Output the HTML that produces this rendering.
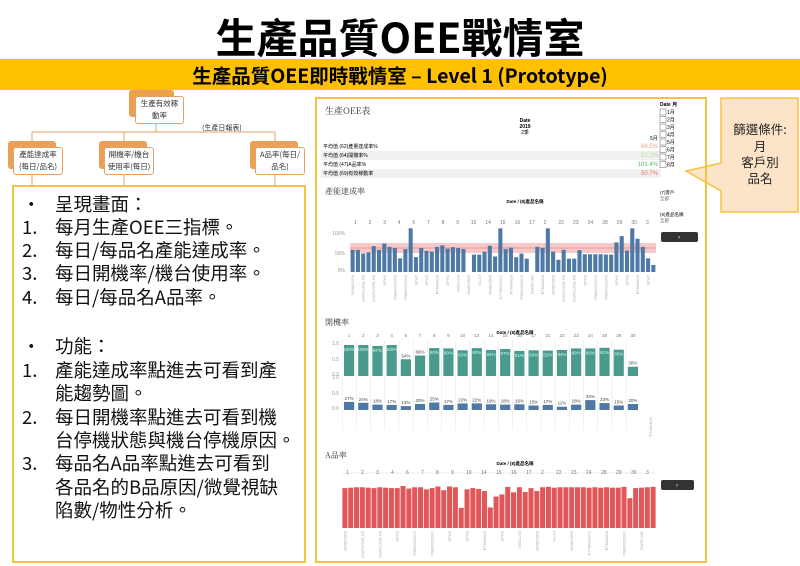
<!DOCTYPE html>
<html><head><meta charset="utf-8">
<style>
*{margin:0;padding:0;box-sizing:border-box}
body{width:800px;height:566px;overflow:hidden;background:#fff;position:relative;font-family:"Liberation Sans","Noto Sans CJK TC",sans-serif;color:#000}
.a{position:absolute}
#title{left:0;width:800px;top:9px;text-align:center;font-size:41px;font-weight:bold;line-height:52px;font-family:"Noto Sans CJK TC",sans-serif}
#bar{left:0;top:59px;width:800px;height:31px;background:#FFC000}
#sub{left:0;width:800px;top:60px;text-align:center;font-size:19.5px;font-weight:bold;line-height:29px;font-family:"Noto Sans CJK TC",sans-serif}
.ob{position:absolute;background:#fff;border:1px solid #E8A060;border-radius:3px;font-size:7.5px;line-height:12px;text-align:center;display:flex;align-items:center;justify-content:center;font-family:"Noto Sans CJK TC",sans-serif;color:#333;white-space:nowrap}
.sh{position:absolute;background:#EBA055;border-radius:3px}
#txt{left:12px;top:185px;width:294px;height:378px;border:2px solid #F5C242}
.ln{position:absolute;left:8px;font-size:18.5px;line-height:23px;font-family:"Noto Sans CJK TC",sans-serif;white-space:nowrap;color:#111}
.ln b{font-weight:normal;display:inline-block;width:33px}
#dash{left:315px;top:97px;width:392px;height:466px;border:2px solid #F5C242}
.s{font-family:"Noto Serif CJK SC",serif}
</style></head><body>
<div class="a" id="title">生產品質OEE戰情室</div>
<div class="a" id="bar"></div>
<div class="a" id="sub">生產品質OEE即時戰情室 – Level 1 (Prototype)</div>

<svg class="a" style="left:0;top:90px" width="310" height="95">
<path d="M156 32 V42 M32 42 H275 M32 42 V55 M124 42 V55 M275 42 V55 M32 83 V95 M124 83 V95 M275 83 V95" stroke="#E8A060" stroke-width="1" fill="none"/>
</svg>
<div class="sh" style="left:129px;top:90px;width:45px;height:27px"></div>
<div class="ob" style="left:135px;top:96px;width:49px;height:28px">生產有效稼<br>動率</div>
<div class="a" style="left:202px;top:123px;font-size:7px;color:#333;font-family:'Noto Sans CJK TC',sans-serif">(生產日報表)</div>
<div class="sh" style="left:8px;top:141px;width:48px;height:28px"></div>
<div class="ob" style="left:13px;top:147px;width:50px;height:28px">產能達成率<br>(每日/品名)</div>
<div class="sh" style="left:99px;top:141px;width:48px;height:28px"></div>
<div class="ob" style="left:104px;top:147px;width:50px;height:28px">開機率/機台<br>使用率(每日)</div>
<div class="sh" style="left:250px;top:141px;width:48px;height:28px"></div>
<div class="ob" style="left:255px;top:147px;width:50px;height:28px">A品率(每日/<br>品名)</div>

<div class="a" id="txt">
<div class="ln" style="top:6px"><b>•</b>呈現畫面：</div>
<div class="ln" style="top:29px"><b>1.</b>每月生產OEE三指標。</div>
<div class="ln" style="top:52px"><b>2.</b>每日/每品名產能達成率。</div>
<div class="ln" style="top:75px"><b>3.</b>每日開機率/機台使用率。</div>
<div class="ln" style="top:99px"><b>4.</b>每日/每品名A品率。</div>
<div class="ln" style="top:148px"><b>•</b>功能：</div>
<div class="ln" style="top:172px"><b>1.</b>產能達成率點進去可看到產</div>
<div class="ln" style="top:195px"><b></b>能趨勢圖。</div>
<div class="ln" style="top:219px"><b>2.</b>每日開機率點進去可看到機</div>
<div class="ln" style="top:242px"><b></b>台停機狀態與機台停機原因。</div>
<div class="ln" style="top:265px"><b>3.</b>每品名A品率點進去可看到</div>
<div class="ln" style="top:289px"><b></b>各品名的B品原因/微覺視缺</div>
<div class="ln" style="top:312px"><b></b>陷數/物性分析。</div>
</div>

<svg class="a" style="left:684px;top:96px" width="116" height="120">
<path d="M37 2 H114 V116 H37 V95 L2 75 L37 67 Z" fill="#FCE4C8" stroke="#F5C242" stroke-width="1.5"/>
<text x="76" y="38" font-size="12.5" text-anchor="middle" font-family="Noto Sans CJK TC,sans-serif" fill="#222">篩選條件:</text>
<text x="76" y="55" font-size="12.5" text-anchor="middle" font-family="Noto Sans CJK TC,sans-serif" fill="#222">月</text>
<text x="76" y="71" font-size="12.5" text-anchor="middle" font-family="Noto Sans CJK TC,sans-serif" fill="#222">客戶別</text>
<text x="76" y="87" font-size="12.5" text-anchor="middle" font-family="Noto Sans CJK TC,sans-serif" fill="#222">品名</text>
</svg>

<div class="a" id="dash"></div>
<svg class="a" id="sv" style="left:315px;top:97px" width="392" height="466" font-family="Liberation Sans,Noto Sans CJK TC,sans-serif">
<text x="10" y="17" font-size="9" class="s" fill="#333">生產OEE表</text>
<text x="210" y="25" font-size="5" text-anchor="middle" font-weight="bold">Date</text>
<text x="210" y="31" font-size="5" text-anchor="middle" font-weight="bold">2019</text>
<text x="210" y="37" font-size="5" text-anchor="middle">2季</text>
<text x="335" y="43" font-size="5">5月</text>
<rect x="6" y="45" width="340" height="9" fill="#fff"/>
<rect x="6" y="54" width="340" height="9" fill="#f0f0f0"/>
<rect x="6" y="63" width="340" height="9" fill="#fff"/>
<rect x="6" y="72" width="340" height="9" fill="#f0f0f0"/>
<text x="8" y="51" font-size="5">平均值 (62)產量達成率%</text>
<text x="8" y="60" font-size="5">平均值 (64)開機率%</text>
<text x="8" y="69" font-size="5">平均值 (47)A品率%</text>
<text x="8" y="78" font-size="5">平均值 (69)有效稼動率</text>
<text x="343" y="51" font-size="6" text-anchor="end" fill="#f4a08a">66.5%</text>
<text x="343" y="60" font-size="6" text-anchor="end" fill="#b5dca0">82.1%</text>
<text x="343" y="69" font-size="6" text-anchor="end" fill="#5cc05c">101.4%</text>
<text x="343" y="78" font-size="6" text-anchor="end" fill="#f07060">50.7%</text>
<text x="345" y="9" font-size="5" font-weight="bold">Date 月</text>
<g id="cb"></g>
<text x="10" y="97" font-size="8" class="s" fill="#333">產能達成率</text>
<text x="210" y="106" font-size="4.5" text-anchor="middle" font-weight="bold">Date / (8)產品名稱</text>
<text x="345" y="97" font-size="4.5">(7)客戶</text><text x="345" y="103" font-size="4.5" fill="#666">全部</text>
<text x="345" y="119" font-size="4.5">(8)產品名稱</text><text x="345" y="125" font-size="4.5" fill="#666">全部</text>
<rect x="346" y="135" width="37" height="10" rx="2" fill="#333"/><text x="364" y="142" font-size="6" fill="#fff" text-anchor="middle">›</text>
<rect x="35" y="146" width="306" height="10" fill="#f4b4b4" opacity="0.7"/>
<line x1="35" y1="151" x2="341" y2="151" stroke="#e06060" stroke-width="0.6"/>
<text x="10" y="228" font-size="8" class="s" fill="#333">開機率</text>
<text x="200" y="237" font-size="4.5" text-anchor="middle" font-weight="bold">Date / (8)產品名稱</text>
<text x="10" y="361" font-size="8" class="s" fill="#333">A品率</text>
<text x="200" y="368" font-size="4.5" text-anchor="middle" font-weight="bold">Date / (8)產品名稱</text>
<rect x="346" y="383" width="33" height="10" rx="2" fill="#333"/><text x="362" y="390" font-size="6" fill="#fff" text-anchor="middle">›</text>
<line x1="27" y1="376" x2="341" y2="376" stroke="#ddd" stroke-width="0.5"/>
<g id="bars"></g>
</svg>
<script>
var NS="http://www.w3.org/2000/svg",g=document.getElementById('bars');
function r(x,y,w,h,c){var e=document.createElementNS(NS,'rect');e.setAttribute('x',x);e.setAttribute('y',y);e.setAttribute('width',w);e.setAttribute('height',h);e.setAttribute('fill',c);g.appendChild(e);}
function t(x,y,s,txt,c,a,rot){var e=document.createElementNS(NS,'text');e.setAttribute('x',x);e.setAttribute('y',y);e.setAttribute('font-size',s);e.setAttribute('fill',c||'#555');if(a)e.setAttribute('text-anchor',a);if(rot)e.setAttribute('transform','rotate(-90 '+x+' '+y+')');e.textContent=txt;g.appendChild(e);}
var cb=document.getElementById('cb');
for(var i=0;i<8;i++){var e=document.createElementNS(NS,'rect');e.setAttribute('x',345);e.setAttribute('y',12+i*7.5);e.setAttribute('width',6);e.setAttribute('height',6);e.setAttribute('fill','#fff');e.setAttribute('stroke','#666');e.setAttribute('stroke-width','0.5');cb.appendChild(e);
var tx=document.createElementNS(NS,'text');tx.setAttribute('x',352);tx.setAttribute('y',17+i*7.5);tx.setAttribute('font-size',5);tx.textContent=(i+1)+'月';cb.appendChild(tx);}
var nm=['V840K25W','LEAFLOSE-D5','LEAFLOSE-D5','SPH2','P080N22W-D','P080N22W-D','SPH2','SPH2','R760AK03','SPH2','G0SU-S3','V840K25W','N1-14','V840K25W','R770K03W-C','R760AK03','P080N02W-D','DW35-031','R760AK03'];
var v1=[60,60,50,53,70,60,77,68,65,37,62,118,40,65,57,55,68,72,63,67,65,62,0,47,47,55,71,42,118,62,66,40,50,36,0,68,65,118,55,33,60,36,36,59,48,48,48,48,47,47,80,97,58,118,90,68,37,19];
var x0=35,w=306/v1.length;
for(var i=0;i<v1.length;i++){if(v1[i])r(x0+i*w+0.6,175-v1[i]*0.37,w-1.2,v1[i]*0.37,'#4E79A7');if(i%2==0)t(x0+i*w+w/2+1.5,178,4,nm[(i/2|0)%nm.length],'#aaa','end',1);}
t(30,138,5,'100%','#999','end');t(30,158,5,'50%','#999','end');t(30,175,5,'0%','#999','end');
var d1=['1','2','3','4','6','7','8','9','10','14','15','16','17','2','22','23','24','28','29','30','3'];
for(var i=0;i<d1.length;i++)t(39+i*14.6,127,5,d1[i],'#777');
var gv=[100,100,97,100,54,66,90,89,83,90,84,87,81,83,82,84,89,89,91,85,89,30];
var bv=[27,24,18,17,13,20,25,17,22,22,19,18,19,15,17,11,18,33,23,15,20,11];
var n=21,cw=298/n;
for(var i=0;i<n;i++){var x=27+i*cw+2,h=gv[i]*0.31;if(i==20)h=30*0.31;
r(x,279-h,cw-4,h,'#4A9A8E');t(x+cw/2-2,279-Math.min(h,31)+(gv[i]>80&&i<20?6:-2),4.5,(i==20?30:gv[i])+'%',gv[i]>80&&i<20?'#cfe':'#444','middle');
var bh=bv[i]*0.3;r(x,313-bh,cw-4,bh,'#4E79A7');t(x+cw/2-2,313-bh-2,4.5,bv[i]+'%','#444','middle');
t(x+cw/2-2,240,4.5,['1','2','3','4','6','7','8','9','10','13','14','15','16','17','21','22','23','24','28','29','30'][i],'#777','middle');
r(27+i*cw,243,0.5,90,'#e4e4e4');}
t(337,318,4,'R760AK03..','#aaa','end',1);
t(24,248,5,'1.0','#999','end');t(24,264,5,'0.5','#999','end');t(24,279,5,'0.0','#999','end');
t(24,282,5,'1.0','#999','end');t(24,298,5,'0.5','#999','end');t(24,313,5,'0.0','#999','end');
var rv=[95,96,97,97,96,95,97,96,95,95,100,94,97,97,92,95,99,90,99,97,48,92,95,93,88,49,75,80,98,85,97,86,95,88,97,98,96,97,97,97,97,97,96,97,96,97,96,96,98,71,95,96,97,98];
var rw=314/rv.length;
for(var i=0;i<rv.length;i++){var h=rv[i]*0.42;r(27+i*rw+0.4,431-h,rw-0.8,h,'#E15759');if(i%3==0)t(27+i*rw+rw/2+1.5,434,4,nm[(i/3|0)%nm.length],'#aaa','end',1);}
var d3=['1','2','3','4','6','7','8','9','10','14','15','16','17','2','22','23','24','28','29','30','3'];
for(var i=0;i<d3.length;i++)t(31+i*15,377,5,d3[i],'#777');
</script>
</body></html>
